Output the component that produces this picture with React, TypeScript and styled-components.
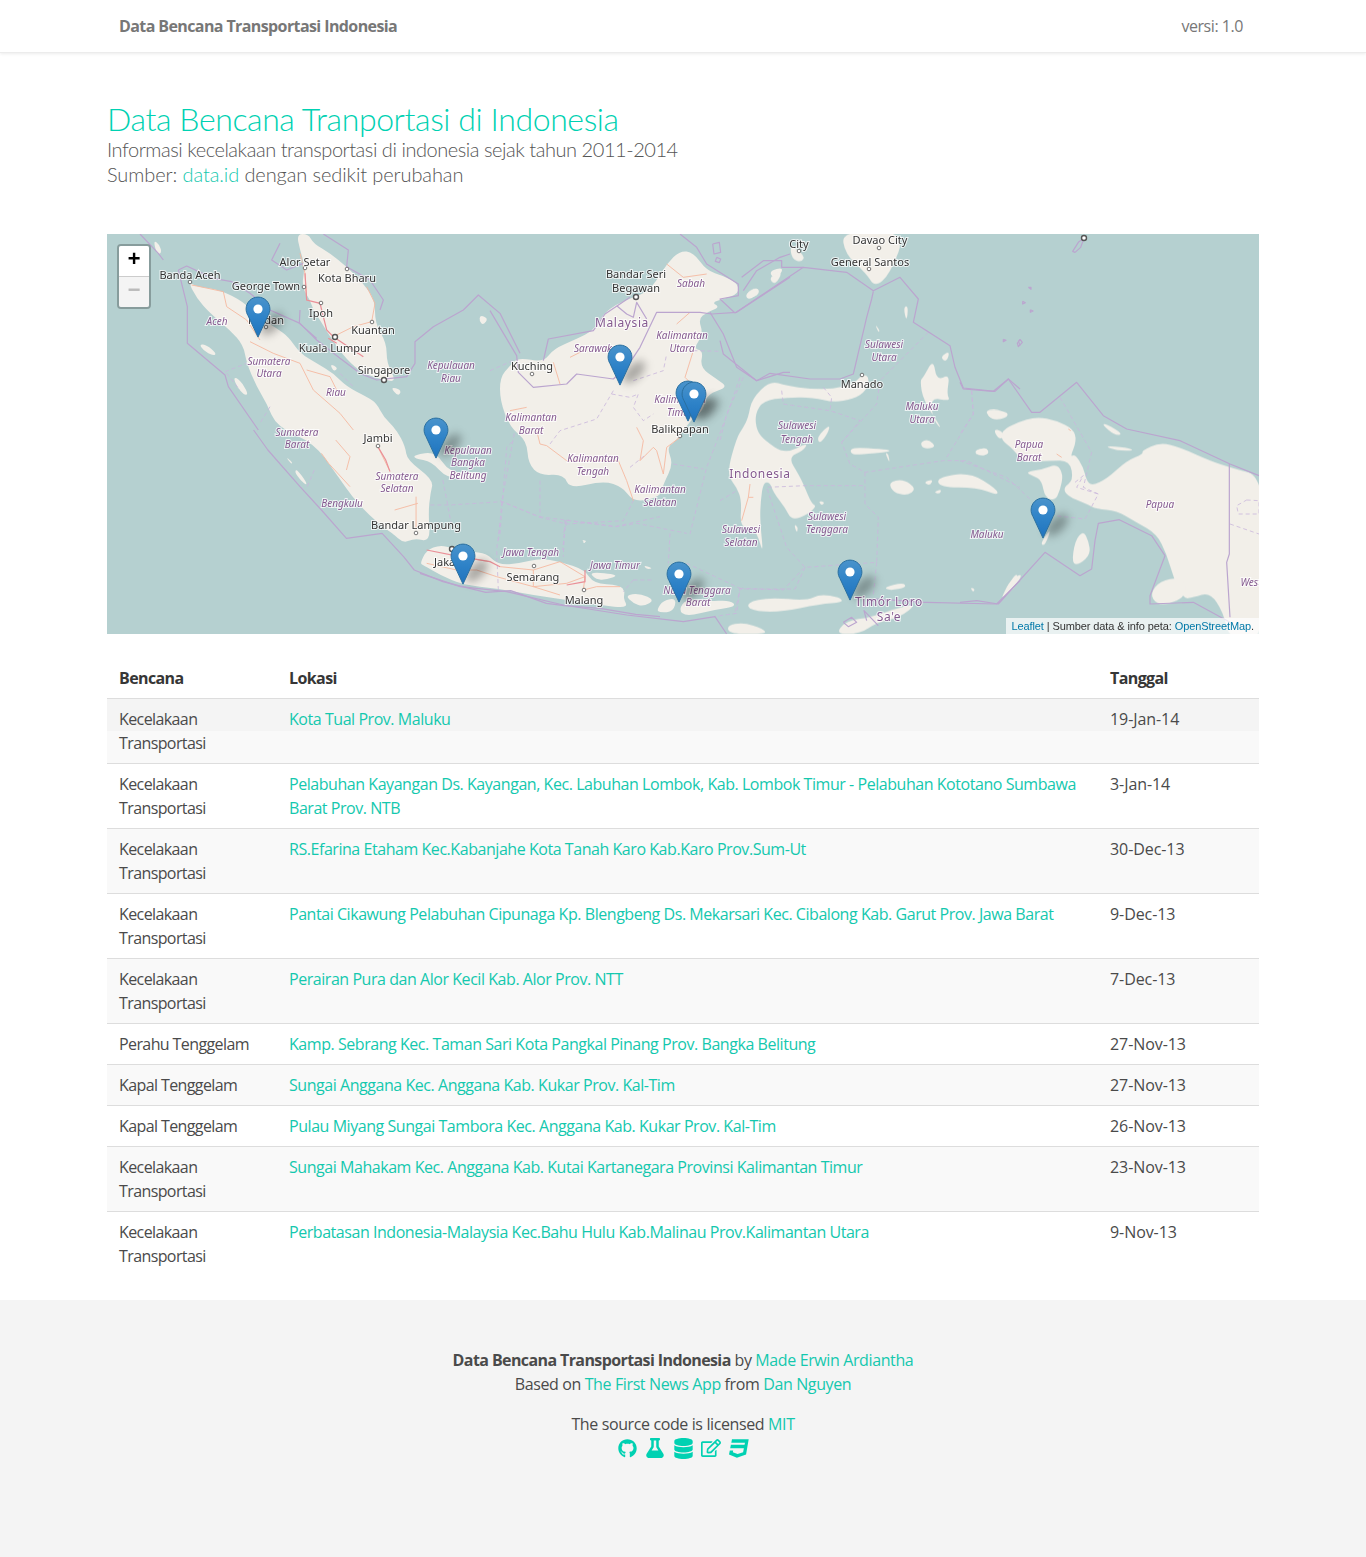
import styled, { createGlobalStyle } from "styled-components";
import { FaGithub, FaFlask, FaDatabase, FaRegEdit, FaCss3 } from "react-icons/fa";

const teal = "#00d1b2";

const GlobalStyle = createGlobalStyle`
  html, body {
    margin: 0;
    padding: 0;
    background: #fff;
  }
  body {
    font-family: "Open Sans", "Noto Sans", sans-serif;
    font-size: 16px;
    line-height: 24px;
    color: #4a4a4a;
    letter-spacing: -0.45px;
  }
  strong {
    letter-spacing: -0.6px;
  }
  a {
    color: #14c8ae;
    text-decoration: none;
  }
`;

const NavBar = styled.header`
  height: 53px;
  display: flex;
  justify-content: space-between;
  align-items: center;
  padding: 0 123px 0 119px;
  box-sizing: border-box;
  border-bottom: 1px solid #ececec;
  box-shadow: rgba(0, 0, 0, 0.08) 0 1px 3px;
`;

const Brand = styled.span`
  font-weight: 700;
  color: #777;
  letter-spacing: -0.6px;
`;

const Version = styled.span`
  color: #777;
`;

const Main = styled.main`
  width: 1152px;
  margin: 0 auto;
`;

const Intro = styled.section`
  padding: 48px 0 47px;
  font-family: Lato, "Open Sans", sans-serif;
  font-weight: 300;
  font-size: 20px;
  line-height: 25px;
  color: #555;
`;

const Title = styled.h1`
  margin: 0;
  font-size: 32px;
  line-height: 36px;
  font-weight: 300;
  letter-spacing: -0.4px;
  color: ${teal};
`;

const SubLine = styled.div<{ $spacing: string }>`
  letter-spacing: ${(p) => p.$spacing};
`;

const MapFrame = styled.div`
  position: relative;
  height: 400px;
  overflow: hidden;
  background: #b5d0d0;
`;

const MapSvg = styled.svg`
  display: block;
  width: 1152px;
  height: 400px;
`;

const TileLayer = styled.g`
  filter: blur(0.35px);
`;

const Land = styled.path`
  fill: #f2efe9;
`;

const Border = styled.polyline`
  fill: none;
  stroke: #bba5cf;
  stroke-width: 1.2;
  stroke-linejoin: round;
  vector-effect: non-scaling-stroke;
`;

const Province = styled.polyline`
  fill: none;
  stroke: #c9b6dc;
  stroke-width: 0.8;
  stroke-dasharray: 4 3;
  vector-effect: non-scaling-stroke;
`;

const Road = styled.polyline<{ $major?: boolean }>`
  fill: none;
  stroke: ${(p) => (p.$major ? "#ea8f97" : "#f5b9a0")};
  stroke-width: ${(p) => (p.$major ? 1.2 : 0.9)};
  vector-effect: non-scaling-stroke;
`;

const City = styled.circle<{ $capital?: boolean }>`
  fill: #fff;
  stroke: #555;
  stroke-width: ${(p) => (p.$capital ? 1.4 : 0.8)};
`;

const PlaceLabel = styled.text<{ $kind: "city" | "region" | "country" }>`
  font-family: "Noto Sans", "Open Sans", sans-serif;
  letter-spacing: ${(p) => (p.$kind === "country" ? "0.6px" : "0")};
  font-size: ${(p) => (p.$kind === "region" ? "10px" : p.$kind === "country" ? "12px" : "11px")};
  font-style: ${(p) => (p.$kind === "region" ? "italic" : "normal")};
  fill: ${(p) => (p.$kind === "city" ? "#333" : "#84598f")};
  stroke: rgba(255, 255, 255, 0.75);
  stroke-width: 2px;
  paint-order: stroke;
  text-anchor: middle;
`;

const PinShadow = styled.ellipse`
  fill: rgba(0, 0, 0, 0.3);
  filter: blur(4px);
`;

const ZoomBar = styled.div`
  position: absolute;
  top: 10px;
  left: 10px;
  width: 30px;
  border: 2px solid rgba(0, 0, 0, 0.25);
  border-radius: 4px;
  background-clip: padding-box;
`;

const ZoomButton = styled.div<{ $disabled?: boolean }>`
  height: 30px;
  display: flex;
  align-items: center;
  justify-content: center;
  font-family: "Liberation Mono", monospace;
  font-weight: 700;
  font-size: 22px;
  letter-spacing: 0;
  background: ${(p) => (p.$disabled ? "#f4f4f4" : "#fff")};
  color: ${(p) => (p.$disabled ? "#bbb" : "#000")};
  border-radius: ${(p) => (p.$disabled ? "0 0 2px 2px" : "2px 2px 0 0")};
  border-bottom: ${(p) => (p.$disabled ? "0" : "1px solid #ccc")};
`;

const Attribution = styled.div`
  position: absolute;
  right: 0;
  bottom: 0;
  height: 16px;
  padding: 0 5px;
  background: rgba(255, 255, 255, 0.7);
  font-family: "Liberation Sans", sans-serif;
  font-size: 11px;
  line-height: 17px;
  letter-spacing: -0.1px;
  color: #333;

  a {
    color: #0078a8;
  }
`;

const DataTable = styled.table`
  width: 100%;
  margin: 24px 0;
  border-collapse: collapse;
  table-layout: fixed;
`;

const HeadCell = styled.th<{ $width: number }>`
  width: ${(p) => p.$width}px;
  padding: 8px 12px;
  box-sizing: border-box;
  text-align: left;
  font-weight: 700;
  letter-spacing: -0.6px;
  color: #363636;
  border-bottom: 1px solid #ddd;
`;

const Row = styled.tr<{ $first?: boolean; $odd?: boolean }>`
  background: ${(p) =>
    p.$first
      ? "linear-gradient(#f4f4f4 32px, #f9f9f9 32px)"
      : p.$odd
        ? "#f9f9f9"
        : "transparent"};
`;

const Cell = styled.td<{ $spacing?: string }>`
  padding: 8px 12px;
  vertical-align: top;
  border-top: 1px solid #ddd;
  letter-spacing: ${(p) => p.$spacing ?? "-0.45px"};
`;

const Footer = styled.footer`
  height: 257px;
  padding-top: 48px;
  box-sizing: border-box;
  background: #f4f4f4;
  text-align: center;
  letter-spacing: -0.38px;
`;

const FooterLine = styled.p`
  margin: 0;
`;

const FooterBlock = styled.div`
  margin-top: 16px;
`;

const IconRow = styled.div`
  display: flex;
  justify-content: center;
`;

const IconLink = styled.a`
  width: 28px;
  height: 24px;
  display: flex;
  align-items: center;
  justify-content: center;
  color: ${teal};
`;

type Crop = {
  x: number;
  y: number;
  sx: number;
  sy: number;
  land?: string[];
  borders?: string[];
  provinces?: string[];
  roads?: string[];
  majorRoads?: string[];
};

// traced from zoomed crops of the map, so each group keeps the crop's own coordinates
const crops: Crop[] = [
  {
    x: 100, y: 230, sx: 3, sy: 3,
    land: [
      "265,155 290,170 360,180 430,215 480,265 530,295 565,320 600,370 650,400 700,430 740,470 800,500 830,520 850,560 890,600 916,650 921,690 1001,750 991,790 985,850 991,935 943,925 910,940 878,910 846,890 771,820 707,730 643,640 530,590 500,520 470,470 440,400 430,345 390,300 330,250 290,205",
      "590,12 600,60 615,110 605,170 630,210 640,240 660,270 690,320 740,390 790,430 850,450 890,455 860,400 860,340 825,280 825,210 790,160 740,110 690,70 640,40 625,12",
      "298,342 320,345 350,370 340,378 310,362",
      "400,440 420,450 445,490 435,497 410,470",
      "160,30 180,45 185,70 170,72",
      "1140,255 1165,265 1150,285 1138,275",
      "870,470 905,480 895,500",
      "690,400 715,415 700,425",
    ],
    borders: [
      "120,12 175,70 190,90",
      "235,120 260,108 340,145 395,155 450,190 510,240 600,280 650,330 720,385 780,430 830,450 920,440 945,400 945,335 1000,290 1090,240 1135,195 1200,250 1260,370",
      "235,120 262,230 262,340 375,435 385,470 475,600",
      "540,40 515,90 560,120 610,100",
      "670,12 745,60 740,110 810,150 850,210 840,240",
      "600,240 598,280 650,325",
    ],
    provinces: ["375,425 440,400", "510,530 480,580", "720,430 760,470", "380,430 420,480"],
    roads: [
      "275,165 300,170 370,185 380,230 440,270 480,330",
      "450,335 520,370 600,400 640,480 720,550 760,600",
      "620,420 690,440 710,480",
      "800,170 825,220 815,275 760,290 700,320",
      "600,70 615,130 620,210",
    ],
    majorRoads: ["615,130 620,210 660,220 680,300 700,320 790,380", "685,325 710,340"],
  },
  {
    x: 100, y: 430, sx: 2.8, sy: 3,
    land: [
      "880,75 940,65 980,130 1060,125 1082,140 1060,150 970,145 930,95 880,85",
      "550,115 580,160 575,165 545,130",
      "520,80 540,98 535,102",
      "1348,330 1362,332 1358,338",
    ],
    borders: [
      "430,0 470,60 560,170 620,240 690,325 790,310 850,380 880,420 960,455 1080,487 1150,482 1250,520 1300,527 1400,535 1500,553 1568,560",
    ],
    provinces: [
      "925,225 980,225 1125,215 1230,260 1440,290 1568,260",
      "1125,215 1115,340",
      "960,150 985,290",
      "1305,270 1295,360",
      "1160,10 1125,215",
      "600,120 580,170",
    ],
    roads: [
      "660,30 700,80 690,120",
      "620,70 640,100 700,170",
      "778,50 810,120",
      "885,200 885,300",
      "825,240 890,220",
    ],
    majorRoads: ["778,50 800,90 812,125"],
  },
  {
    x: 490, y: 234, sx: 3, sy: 3,
    land: [
      "30,430 60,395 85,370 160,385 190,345 260,315 310,290 340,240 380,210 430,190 470,175 500,140 530,90 570,50 610,55 650,110 700,125 745,150 745,180 700,195 665,205 690,220 650,235 625,255 640,300 610,345 640,350 630,400 680,435 715,460 650,480 640,530 600,560 560,620 530,640 550,690 520,750 510,790 430,805 400,760 340,740 240,765 220,720 150,725 115,690 110,620 60,580 30,500",
      "765,180 800,160 810,175 775,200",
      "840,110 880,100 870,125 845,130",
    ],
    borders: [
      "0,230 80,365 85,415 130,460 230,450 260,420 370,435 410,400 450,340 500,235 630,235 665,240 740,235 900,130",
      "160,380 175,315 310,290 345,240 420,190",
      "380,215 410,240 430,250 440,205 470,255",
      "660,235 700,300 740,400 800,440 880,415 900,415",
      "570,0 620,40 650,90 745,150 745,185 690,195 735,237",
      "668,30 688,25 692,55 672,60 668,30",
      "680,70 692,75 688,86 676,82 680,70",
      "760,170 800,110 870,70 900,60",
    ],
    provinces: [
      "750,430 710,545 650,700 610,860 600,900",
      "550,690 640,705",
      "30,800 150,850 230,870 400,860 430,800",
      "150,740 150,850",
      "30,900 50,640 70,620",
      "0,410 80,375",
      "230,865 220,900",
      "610,350 690,352",
      "365,480 420,490 445,480 430,520 460,560 490,540",
      "370,470 320,555 210,590 180,630",
      "420,700 470,660",
      "430,440 520,410 530,360",
    ],
    roads: [
      "110,520 60,530",
      "140,590 150,630 170,635 230,680 385,680 410,740 430,800",
      "440,580 460,620 450,680 490,640 500,650 520,720 530,640 570,610",
      "190,385 210,450",
      "240,370 290,345",
      "530,90 580,130 650,120",
      "560,270 600,235",
      "610,350 585,430 600,445",
    ],
  },
  {
    x: 720, y: 234, sx: 3, sy: 3,
    land: [
      "85,550 95,495 150,440 200,455 270,465 340,465 400,450 430,420 448,430 440,470 400,495 340,505 280,490 200,490 130,500 105,540 110,590 135,620 195,660 265,625 250,650 205,670 235,720 250,750 275,810 290,815 265,840 215,860 195,820 160,775 150,745 130,745 122,800 120,860 130,960 115,910 100,880 60,880 65,800 50,760 20,720 50,610 70,580",
      "610,430 640,375 650,440 690,420 680,480 692,502 630,490 640,560 670,590 610,500 600,440",
      "660,370 690,350 680,385",
      "600,625 625,615 650,640 610,645",
      "390,645 420,640 535,650 440,660 395,662",
      "495,655 505,660 510,690",
      "760,650 800,640 808,660 780,665",
      "505,745 550,735 590,765 560,785 520,775",
      "650,730 750,715 830,765 835,785 770,760 660,760",
      "610,745 640,735 630,755",
      "640,775 665,765 660,780",
      "80,1105 150,1090 260,1100 300,1080 360,1090 370,1105 300,1110 180,1135 90,1130",
      "490,1060 550,1045 560,1060 510,1070",
      "345,1200 380,1160 450,1150 540,1120 590,1110 540,1150 470,1165 420,1200",
      "20,1175 70,1165 130,1185 140,1200 30,1200",
      "365,-10 560,-10 510,120 465,160 440,120 375,60",
      "210,30 255,65 245,85 215,75",
      "80,175 110,160 120,180 85,195",
      "145,130 190,110 165,155",
      "222,870 235,880 230,898",
      "295,800 315,805 305,815",
      "290,610 330,570 325,595 300,630",
      "550,220 565,215 560,265",
      "465,270 480,290 475,295",
      "795,535 860,530 865,550 820,560",
      "860,1060 890,1015 895,1040 860,1075",
    ],
    borders: [
      "0,320 10,360 110,440 150,418 270,435 360,435 400,420 440,250 455,195 460,172",
      "45,237 250,100 380,115 460,170 540,130 595,195 580,265 690,335 705,400 730,462 825,472 865,435 900,465",
      "65,130 130,80 185,80 185,100 250,100",
      "610,1105 830,1110 900,1040",
      "430,1120 470,1095 540,1100 610,1105",
      "370,1165 395,1150 410,1165 385,1178 370,1165",
      "440,1160 432,1130 475,1175",
      "895,320 900,335",
    ],
    provinces: [
      "70,430 20,540 0,620",
      "190,510 330,530 420,560 365,625 390,690 435,715 670,680 740,680 900,760",
      "365,625 470,510 480,440 625,295",
      "755,470 760,540 680,670",
      "435,715 435,810 475,850 470,985 255,1000 200,940 140,760 255,755 435,755",
      "255,1000 225,1065 60,1065 45,1135",
      "0,800 50,770",
      "470,985 460,1085",
      "185,470 190,510",
      "310,460 335,490 330,530",
    ],
    roads: ["90,750 85,790 65,860", "85,790 100,790"],
  },
  {
    x: 960, y: 234, sx: 3, sy: 3,
    land: [
      "125,590 170,565 230,548 290,560 340,585 350,620 330,670 345,660 370,700 380,740 395,755 440,735 500,680 550,660 545,650 600,625 660,640 750,680 810,700 920,730 920,1220 810,1220 790,1135 750,1075 700,1090 670,1095 640,1030 620,960 590,900 530,865 470,830 410,825 380,810 320,785 310,760 340,740 330,680 270,680 190,685 155,640 125,620",
      "195,715 250,705 290,690 310,720 300,770 285,800 255,790 245,740 220,725",
      "570,1080 600,1040 660,1030 680,1060 670,1090 630,1110 590,1110",
      "335,990 345,920 370,890 385,920 392,960 360,990",
      "240,930 275,880 255,935",
      "75,530 110,525 145,540 110,555 90,550",
      "40,655 80,640 85,660 60,665",
      "100,585 125,590 135,610 115,615",
      "425,570 440,570 490,600 465,605",
      "430,635 500,640 525,650 470,650",
      "130,1080 150,1040 190,1015 165,1060 125,1095",
      "30,1060 45,1065 40,1075",
    ],
    borders: [
      "0,445 10,465 100,472 145,435 215,535 240,535 350,445 430,545 500,585 660,620 810,690 897,725",
      "808,690 808,960 800,985 810,1150",
      "0,1105 50,1100 115,1110 255,955 360,1025 395,1005 405,920 415,868 478,857 575,905 615,965 570,1085 570,1110 700,1105 810,1165",
      "205,160 213,160 213,166 205,160",
      "188,202 196,206 188,210 188,202",
      "211,227 219,231 211,235 211,227",
      "130,316 138,319 130,323 130,316",
      "180,316 187,325 175,338 172,328 180,316",
      "372,12 355,25 338,52 345,55 362,40 372,12",
    ],
    provinces: [
      "35,470 40,540 0,600",
      "300,490 395,655 370,760 415,780 375,855 285,845",
      "0,680 140,730 215,800",
      "810,870 897,900",
      "860,798 897,800 897,840 835,840 830,815 860,798",
      "345,745 370,725 350,760 415,780",
    ],
    roads: ["325,585 332,590", "290,660 305,670"],
  },
  {
    x: 420, y: 520, sx: 3, sy: 3,
    land: [
      "0,130 20,90 60,75 100,85 150,95 200,100 235,135 300,130 360,115 420,125 495,150 520,190 600,195 615,215 610,235 625,265 540,255 440,240 340,225 230,205 130,195 60,165 10,135",
      "615,225 660,220 705,240 670,260 640,250",
      "710,270 730,240 770,235 760,275 720,278",
      "775,270 800,235 860,245 930,240 950,260 880,270 800,290",
      "530,180 505,155 600,165 560,178",
      "670,135 700,145 680,148",
      "490,62 498,66 490,70",
    ],
    borders: ["0,160 120,200 260,215 430,255 620,285 790,305 885,290 920,342"],
    provinces: [
      "240,10 230,90 235,210",
      "435,0 430,110",
      "750,40 745,130",
      "640,180 700,180",
      "640,180 610,215",
      "800,130 960,205 950,280 880,290",
      "960,205 1090,210 1150,145",
      "440,0 590,20 650,10 800,40",
    ],
    roads: [
      "120,110 210,125",
      "240,140 340,150 420,125 495,170",
      "495,170 490,210 530,200 600,200",
      "230,170 340,200 440,190 495,170",
      "340,200 420,225",
      "20,130 110,150 170,150 230,170",
      "340,150 340,200",
    ],
    majorRoads: ["20,90 120,110 210,125 240,140", "495,150 495,185 440,195"],
  },
];

const cropTransform = (c: Crop) => `translate(${c.x} ${c.y}) scale(${1 / c.sx} ${1 / c.sy})`;

// rounds a traced outline: curves run through the midpoints of its edges
const smoothOutline = (points: string) => {
  const pts = points.split(" ").map((p) => p.split(",").map(Number));
  const mid = (a: number[], b: number[]) => `${(a[0] + b[0]) / 2},${(a[1] + b[1]) / 2}`;
  let d = `M${mid(pts[pts.length - 1], pts[0])}`;
  pts.forEach((p, i) => {
    d += ` Q${p[0]},${p[1]} ${mid(p, pts[(i + 1) % pts.length])}`;
  });
  return d + "z";
};

const cities: [number, number, boolean?][] = [
  [190, 282], [304, 287], [305, 268], [347, 269], [321, 303], [372, 322], [335, 337, true],
  [384, 380, true], [266, 327], [532, 374], [636, 297, true], [680, 436], [862, 375], [378, 446],
  [416, 533], [452, 549, true], [534, 566], [584, 590], [799, 251], [879, 248], [869, 269], [1084, 238, true],
];

const labels: [string, number, number, "city" | "region" | "country"][] = [
  ["City", 799, 248, "city"],
  ["Davao City", 880, 244, "city"],
  ["General Santos", 870, 266, "city"],
  ["Alor Setar", 305, 266, "city"],
  ["Banda Aceh", 190, 279, "city"],
  ["Kota Bharu", 347, 282, "city"],
  ["George Town", 266, 290, "city"],
  ["Ipoh", 321, 317, "city"],
  ["Medan", 266, 324, "city"],
  ["Kuantan", 373, 334, "city"],
  ["Kuala Lumpur", 335, 352, "city"],
  ["Singapore", 384, 374, "city"],
  ["Kuching", 532, 370, "city"],
  ["Manado", 862, 388, "city"],
  ["Balikpapan", 680, 433, "city"],
  ["Jambi", 378, 442, "city"],
  ["Bandar Lampung", 416, 529, "city"],
  ["Jakarta", 452, 566, "city"],
  ["Semarang", 533, 581, "city"],
  ["Malang", 584, 604, "city"],
  ["Bandar Seri", 636, 278, "city"],
  ["Begawan", 636, 292, "city"],
  ["Indonesia", 760, 478, "country"],
  ["Malaysia", 622, 327, "country"],
  ["Timór Loro", 889, 606, "country"],
  ["Sa'e", 889, 621, "country"],
  ["Aceh", 217, 325, "region"],
  ["Sumatera", 269, 365, "region"],
  ["Utara", 269, 377, "region"],
  ["Riau", 336, 396, "region"],
  ["Kepulauan", 451, 369, "region"],
  ["Riau", 451, 382, "region"],
  ["Sumatera", 297, 436, "region"],
  ["Barat", 297, 448, "region"],
  ["Kepulauan", 468, 454, "region"],
  ["Bangka", 468, 466, "region"],
  ["Belitung", 468, 479, "region"],
  ["Sumatera", 397, 480, "region"],
  ["Selatan", 397, 492, "region"],
  ["Bengkulu", 342, 507, "region"],
  ["Sabah", 691, 287, "region"],
  ["Sarawak", 593, 352, "region"],
  ["Kalimantan", 682, 339, "region"],
  ["Utara", 682, 352, "region"],
  ["Kalimantan", 680, 403, "region"],
  ["Timur", 680, 416, "region"],
  ["Kalimantan", 531, 421, "region"],
  ["Barat", 531, 434, "region"],
  ["Kalimantan", 593, 462, "region"],
  ["Tengah", 593, 475, "region"],
  ["Kalimantan", 660, 493, "region"],
  ["Selatan", 660, 506, "region"],
  ["Sulawesi", 884, 348, "region"],
  ["Utara", 884, 361, "region"],
  ["Maluku", 922, 410, "region"],
  ["Utara", 922, 423, "region"],
  ["Sulawesi", 797, 429, "region"],
  ["Tengah", 797, 443, "region"],
  ["Sulawesi", 741, 533, "region"],
  ["Selatan", 741, 546, "region"],
  ["Sulawesi", 827, 520, "region"],
  ["Tenggara", 827, 533, "region"],
  ["Papua", 1029, 448, "region"],
  ["Barat", 1029, 461, "region"],
  ["Papua", 1160, 508, "region"],
  ["Maluku", 987, 538, "region"],
  ["Jawa Tengah", 531, 556, "region"],
  ["Jawa Timur", 615, 569, "region"],
  ["Nusa Tenggara", 697, 594, "region"],
  ["Barat", 698, 606, "region"],
  ["West", 1251, 586, "region"],
];

// tip of each pin, in page coordinates
const pins: [number, number][] = [
  [258, 337], [620, 385], [688, 421], [694, 422], [436, 458], [463, 584], [679, 602], [850, 600], [1043, 538],
];

const rows: [string, string, string][] = [
  ["Kecelakaan Transportasi", "Kota Tual Prov. Maluku", "19-Jan-14"],
  ["Kecelakaan Transportasi", "Pelabuhan Kayangan Ds. Kayangan, Kec. Labuhan Lombok, Kab. Lombok Timur - Pelabuhan Kototano Sumbawa Barat Prov. NTB", "3-Jan-14"],
  ["Kecelakaan Transportasi", "RS.Efarina Etaham Kec.Kabanjahe Kota Tanah Karo Kab.Karo Prov.Sum-Ut", "30-Dec-13"],
  ["Kecelakaan Transportasi", "Pantai Cikawung Pelabuhan Cipunaga Kp. Blengbeng Ds. Mekarsari Kec. Cibalong Kab. Garut Prov. Jawa Barat", "9-Dec-13"],
  ["Kecelakaan Transportasi", "Perairan Pura dan Alor Kecil Kab. Alor Prov. NTT", "7-Dec-13"],
  ["Perahu Tenggelam", "Kamp. Sebrang Kec. Taman Sari Kota Pangkal Pinang Prov. Bangka Belitung", "27-Nov-13"],
  ["Kapal Tenggelam", "Sungai Anggana Kec. Anggana Kab. Kukar Prov. Kal-Tim", "27-Nov-13"],
  ["Kapal Tenggelam", "Pulau Miyang Sungai Tambora Kec. Anggana Kab. Kukar Prov. Kal-Tim", "26-Nov-13"],
  ["Kecelakaan Transportasi", "Sungai Mahakam Kec. Anggana Kab. Kutai Kartanegara Provinsi Kalimantan Timur", "23-Nov-13"],
  ["Kecelakaan Transportasi", "Perbatasan Indonesia-Malaysia Kec.Bahu Hulu Kab.Malinau Prov.Kalimantan Utara", "9-Nov-13"],
];

const Pin = ({ x, y }: { x: number; y: number }) => (
  <g transform={`translate(${x - 12.5} ${y - 40.5})`}>
    <path
      d="M12.5.6C5.9.6.6 5.9.6 12.5c0 2.4.7 4.6 1.9 6.6L12.5 40.6 22.5 19.1c1.2-2 1.9-4.2 1.9-6.6C24.4 5.9 19.1.6 12.5.6z"
      fill="url(#pinFill)"
      stroke="#2a6f9f"
      strokeWidth="1"
    />
    <circle cx="12.5" cy="12.5" r="4.6" fill="#fff" />
  </g>
);

const IndonesiaMap = () => (
  <MapSvg viewBox="107 234 1152 400">
    <defs>
      <linearGradient id="pinFill" x1="0" y1="0" x2="0" y2="1">
        <stop offset="0" stopColor="#4a93cb" />
        <stop offset="0.5" stopColor="#2f83c8" />
        <stop offset="1" stopColor="#1f73bd" />
      </linearGradient>
    </defs>
    <TileLayer>
      {crops.map((c, i) => (
        <g key={i} transform={cropTransform(c)}>
          {c.land?.map((p) => <Land key={p} d={smoothOutline(p)} />)}
        </g>
      ))}
      {crops.map((c, i) => (
        <g key={i} transform={cropTransform(c)}>
          {c.provinces?.map((p) => <Province key={p} points={p} />)}
          {c.roads?.map((p) => <Road key={p} points={p} />)}
          {c.majorRoads?.map((p) => <Road key={p} points={p} $major />)}
          {c.borders?.map((p) => <Border key={p} points={p} />)}
        </g>
      ))}
    </TileLayer>
    {cities.map(([x, y, capital]) => (
      <City key={`${x}-${y}`} cx={x} cy={y} r={capital ? 2.5 : 1.8} $capital={capital} />
    ))}
    {labels.map(([name, x, y, kind]) => (
      <PlaceLabel key={`${name}-${x}-${y}`} x={x} y={y} $kind={kind}>
        {name}
      </PlaceLabel>
    ))}
    {pins.map(([x, y]) => (
      <PinShadow key={`${x}-${y}`} cx={x + 14} cy={y - 13} rx={14} ry={7} transform={`rotate(-45 ${x + 14} ${y - 13})`} />
    ))}
    {pins.map(([x, y]) => (
      <Pin key={`${x}-${y}`} x={x} y={y} />
    ))}
  </MapSvg>
);

const App = () => {
  return (
    <>
      <GlobalStyle />
      <NavBar>
        <Brand>Data Bencana Transportasi Indonesia</Brand>
        <Version>versi: 1.0</Version>
      </NavBar>
      <Main>
        <Intro>
          <Title>Data Bencana Tranportasi di Indonesia</Title>
          <SubLine $spacing="-0.45px">Informasi kecelakaan transportasi di indonesia sejak tahun 2011-2014</SubLine>
          <SubLine $spacing="-0.1px">
            Sumber: <a href="#data">data.id</a> dengan sedikit perubahan
          </SubLine>
        </Intro>
        <MapFrame>
          <IndonesiaMap />
          <ZoomBar>
            <ZoomButton>+</ZoomButton>
            <ZoomButton $disabled>−</ZoomButton>
          </ZoomBar>
          <Attribution>
            <a href="#leaflet">Leaflet</a> | Sumber data &amp; info peta: <a href="#osm">OpenStreetMap</a>.
          </Attribution>
        </MapFrame>
        <DataTable>
          <thead>
            <tr>
              <HeadCell $width={170}>Bencana</HeadCell>
              <HeadCell $width={821}>Lokasi</HeadCell>
              <HeadCell $width={161}>Tanggal</HeadCell>
            </tr>
          </thead>
          <tbody>
            {rows.map(([kind, place, date], i) => (
              <Row key={place} $first={i === 0} $odd={i % 2 === 0}>
                <Cell $spacing="-0.6px">{kind}</Cell>
                <Cell>
                  <a href="#lokasi">{place}</a>
                </Cell>
                <Cell $spacing="-0.07px">{date}</Cell>
              </Row>
            ))}
          </tbody>
        </DataTable>
      </Main>
      <Footer>
        <FooterLine>
          <strong>Data Bencana Transportasi Indonesia</strong> by <a href="#erwin">Made Erwin Ardiantha</a>
        </FooterLine>
        <FooterLine>
          Based on <a href="#app">The First News App</a> from <a href="#dan">Dan Nguyen</a>
        </FooterLine>
        <FooterBlock>
          <FooterLine>
            The source code is licensed <a href="#mit">MIT</a>
          </FooterLine>
          <IconRow>
            <IconLink href="#github"><FaGithub size={19} /></IconLink>
            <IconLink href="#flask"><FaFlask size={20} /></IconLink>
            <IconLink href="#database"><FaDatabase size={21} /></IconLink>
            <IconLink href="#edit"><FaRegEdit size={20} /></IconLink>
            <IconLink href="#css"><FaCss3 size={21} /></IconLink>
          </IconRow>
        </FooterBlock>
      </Footer>
    </>
  );
};

export default App;
